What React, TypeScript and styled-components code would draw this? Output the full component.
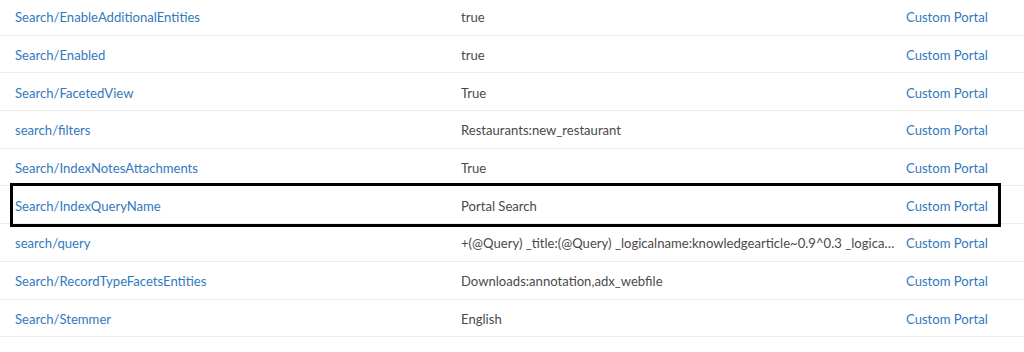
import styled, { createGlobalStyle } from "styled-components";

const GlobalStyle = createGlobalStyle`
    html, body {
        margin: 0;
        padding: 0;
        background: #ffffff;
        overflow: hidden;
    }
`;

const linkBlue = "#3279bd";
const textGray = "#4a4a4a";
const lineGray = "#ececec";

const Table = styled.div`
    width: 1024px;
    margin-top: -2px;
    font-family: "Lato", "Liberation Sans", sans-serif;
    font-size: 13.1px;
`;

const Row = styled.div<{ $selected?: boolean }>`
    position: relative;
    display: grid;
    grid-template-columns: 446px 445px 1fr;
    align-items: center;
    height: 34.7px;
    padding: 2px 0 0 15px;
    border-bottom: 1px solid ${lineGray};

    &::after {
        content: "";
        display: ${(p) => (p.$selected ? "block" : "none")};
        position: absolute;
        left: 10px;
        right: 23px;
        top: -3px;
        bottom: -4px;
        border: 3px solid #000000;
        pointer-events: none;
    }
`;

const NameCell = styled.a`
    color: ${linkBlue};
    text-decoration: none;
    white-space: nowrap;
`;

const ValueCell = styled.span`
    min-width: 0;
    color: ${textGray};
    white-space: nowrap;
    overflow: hidden;
    text-overflow: ellipsis;
    padding-right: 10px;
`;

const WebsiteCell = styled.a`
    color: ${linkBlue};
    text-decoration: none;
    white-space: nowrap;
`;

interface SiteSetting {
    name: string;
    value: string;
    website: string;
    selected?: boolean;
}

const settings: SiteSetting[] = [
    { name: "Search/EnableAdditionalEntities", value: "true", website: "Custom Portal" },
    { name: "Search/Enabled", value: "true", website: "Custom Portal" },
    { name: "Search/FacetedView", value: "True", website: "Custom Portal" },
    { name: "search/filters", value: "Restaurants:new_restaurant", website: "Custom Portal" },
    { name: "Search/IndexNotesAttachments", value: "True", website: "Custom Portal" },
    { name: "Search/IndexQueryName", value: "Portal Search", website: "Custom Portal", selected: true },
    {
        name: "search/query",
        value: "+(@Query) _title:(@Query) _logicalname:knowledgearticle~0.9^0.3 _logicalname:annotation~0.9^0.25",
        website: "Custom Portal",
    },
    { name: "Search/RecordTypeFacetsEntities", value: "Downloads:annotation,adx_webfile", website: "Custom Portal" },
    { name: "Search/Stemmer", value: "English", website: "Custom Portal" },
];

function App(): JSX.Element {
    return (
        <>
            <GlobalStyle />
            <Table>
                {settings.map((s) => (
                    <Row key={s.name} $selected={s.selected}>
                        <NameCell>{s.name}</NameCell>
                        <ValueCell>{s.value}</ValueCell>
                        <WebsiteCell>{s.website}</WebsiteCell>
                    </Row>
                ))}
            </Table>
        </>
    );
}

export default App;
